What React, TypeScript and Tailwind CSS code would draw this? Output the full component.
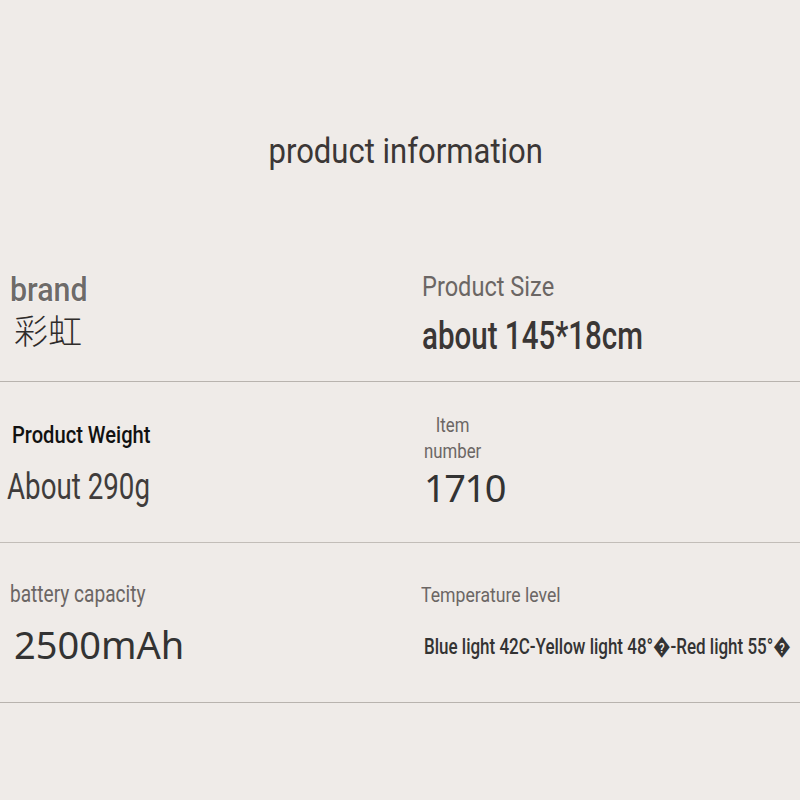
import React from "react";

const narrow = { fontFamily: 'Roboto, "Liberation Sans", sans-serif' };
const noto = { fontFamily: '"Noto Sans", sans-serif' };

export default function App() {
  return (
    <div className="min-h-[800px] w-[800px] overflow-hidden bg-[#efebe8] text-[#363231]" style={narrow}>
      {/* title */}
      <div className="h-[260px] flex justify-center pt-[134px]">
        <h1 className="inline-block text-[35px] leading-none text-[#3b3736] ml-[12px] scale-x-[0.887]">
          product information
        </h1>
      </div>

      {/* row 1 */}
      <div className="flex h-[122px] border-b border-[#b8b3ae]">
        <div className="w-[412px] shrink-0 pl-[10px] pt-[13px]">
          <div className="inline-block origin-left scale-x-[0.92] text-[33px] leading-none font-medium text-[#6e6b69] [text-shadow:0_0_2px_#fff,0_0_1px_#fff]">
            brand
          </div>
          <div
            className="text-[34px] leading-none mt-[5px] ml-[4px] font-light text-[#2f2c2b]"
            style={{ fontFamily: '"Noto Sans CJK SC", sans-serif' }}
          >
            彩虹
          </div>
        </div>
        <div className="flex-1 pl-[10px] pt-[14px]">
          <div className="inline-block origin-left scale-x-[0.874] text-[27px] leading-none text-[#6b6664]">
            Product Size
          </div>
          <div className="block">
            <div className="inline-block origin-left scale-x-[0.757] text-[39px] leading-none mt-[14px] font-medium text-[#3a3635] whitespace-nowrap">
              about 145*18cm
            </div>
          </div>
        </div>
      </div>

      {/* row 2 */}
      <div className="flex h-[161px] border-b border-[#c2bdb8]">
        <div className="w-[412px] shrink-0 pl-[12px] pt-[42px]">
          <div className="inline-block origin-left scale-x-[0.875] text-[23px] leading-none font-medium text-[#111] whitespace-nowrap">
            Product Weight
          </div>
          <div className="block -ml-[5px]">
            <div className="inline-block origin-left scale-x-[0.77] text-[36px] leading-none mt-[19px] text-[#403c3b] whitespace-nowrap">
              About 290g
            </div>
          </div>
        </div>
        <div className="flex-1 pl-[12px] pt-[30px]">
          <div className="inline-block origin-left scale-x-[0.8] text-[21px] leading-[26px] text-[#6b6664] text-center">
            <div>Item</div>
            <div>number</div>
          </div>
          <div className="text-[38px] leading-none tracking-[-0.04em] mt-[3px] text-[#333]" style={noto}>
            1710
          </div>
        </div>
      </div>

      {/* row 3 */}
      <div className="flex h-[160px] border-b border-[#b8b3ae]">
        <div className="w-[412px] shrink-0 pl-[10px] pt-[40px]">
          <div className="inline-block origin-left scale-x-[0.83] text-[23px] leading-none text-[#6b6664] whitespace-nowrap">
            battery capacity
          </div>
          <div className="text-[38px] leading-none mt-[16px] ml-[4px] text-[#333]" style={noto}>
            2500mAh
          </div>
        </div>
        <div className="flex-1 min-w-0 pl-[9px] pt-[42px]">
          <div className="inline-block origin-left scale-x-[0.84] text-[21px] leading-none text-[#6b6664] whitespace-nowrap">
            Temperature level
          </div>
          <div className="block ml-[3px]">
            <div className="inline-block origin-left scale-x-[0.772] text-[22px] leading-none mt-[27px] font-medium text-[#333] whitespace-nowrap">
              Blue light 42C-Yellow light 48°{"\uFFFD"}-Red light 55°{"\uFFFD"}
            </div>
          </div>
        </div>
      </div>
    </div>
  );
}
